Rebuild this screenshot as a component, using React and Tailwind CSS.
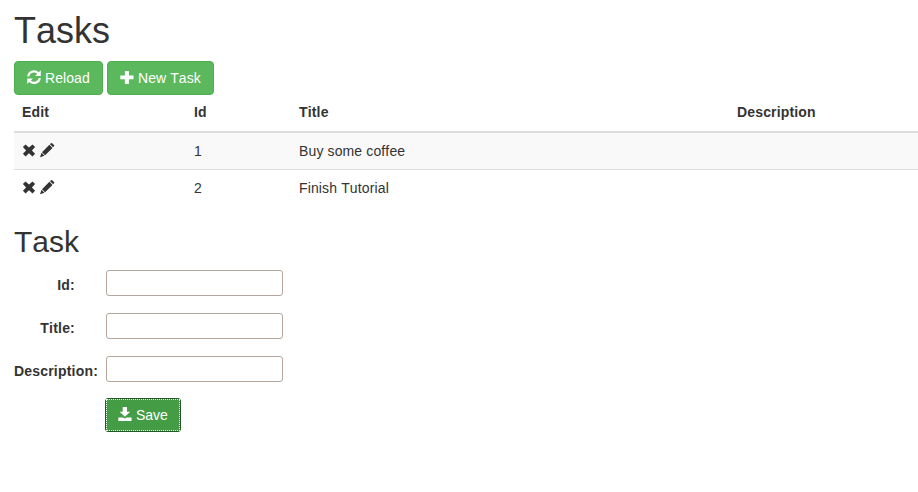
const Icon = ({ children }) => (
  <svg viewBox="0 0 14 14" width="14" height="14" fill="currentColor" className="relative -top-px shrink-0 overflow-visible">
    {children}
  </svg>
);

const Refresh = () => (
  <Icon>
    <path d="M.3 6.4A6.7 6.2 0 0 1 11.8 2.2L13.8.3V5.9H8.1L10.2 3.7A4.8 4.6 0 0 0 2.2 6.4Z" />
    <path d="M13.7 7.9A6.7 6.2 0 0 1 2.2 12.1L.2 14V8.4H5.9L3.8 10.6A4.8 4.6 0 0 0 11.8 7.9Z" />
  </Icon>
);

const Plus = () => (
  <Icon>
    <path d="M5.3 1h3.2q.4 0 .4.4v4h4.2q.4 0 .4.4v3.1q0 .4-.4.4H8.9v4.2q0 .4-.4.4H5.3q-.4 0-.4-.4V9.3H.7q-.4 0-.4-.4V5.8q0-.4.4-.4h4.2v-4q0-.4.4-.4Z" />
  </Icon>
);

const Remove = () => (
  <Icon>
    <path d="M3.5 1.4 7 4.5l3.5-3.1 2.6 2.6-3.2 3.4 3.2 3.4-2.6 2.6L7 10.3l-3.5 3.1L.9 10.8l3.2-3.4L.9 4Z" />
  </Icon>
);

const Pencil = () => (
  <Icon>
    <path d="M10.9.3q.6-.6 1.2 0l1.9 1.8q.6.6 0 1.2l-.9.9-3.1-3ZM9.4 1.8l3.1 3.1-7.4 7.4L2 9.2ZM1.5 9.8l3 3L0 14.2Z" />
  </Icon>
);

const Save = () => (
  <Icon>
    <path d="M4.7 0h4.3v4.7h3.2L6.9 9.8 1.6 4.7h3.1ZM.3 10.4h4.6l2 1.2 2-1.2h4.7v3.2q0 .4-.4.4H.7q-.4 0-.4-.4Z" />
  </Icon>
);

const tasks = [
  { id: 1, title: "Buy some coffee", row: "h-9 bg-[#f9f9f9]" },
  { id: 2, title: "Finish Tutorial", row: "h-[37px] border-t border-[#ddd]" },
];

const fields = [
  { label: "Id:", pad: "pr-[31px]" },
  { label: "Title:", pad: "pr-[31px]" },
  { label: "Description:", pad: "pr-2" },
];

const columns = "grid grid-cols-[172px_105px_438px_1fr] px-2";
const button = "flex h-[34px] items-center gap-1 rounded border border-[#4cae4c] bg-[#5cb85c] px-3 text-white tracking-[0.07px] whitespace-nowrap";

export default function App() {
  return (
    <main className="h-[492px] w-full overflow-hidden bg-white pl-3.5 font-['Liberation_Sans',Arial,sans-serif] text-sm leading-5 text-[#333] [font-kerning:none]">
      <h1 className="h-[61px] pt-[11px] text-[36px] leading-10">Tasks</h1>
      <div className="flex gap-1">
        <button className={`${button} w-[89px]`}><Refresh />Reload</button>
        <button className={`${button} w-[107px]`}><Plus />New Task</button>
      </div>
      <div>
        <div className={`${columns} h-[38px] border-b-2 border-[#ddd] pt-[7px] font-bold tracking-[0.16px]`}>
          <span>Edit</span><span>Id</span><span>Title</span><span>Description</span>
        </div>
        {tasks.map((task) => (
          <div key={task.id} className={`${columns} ${task.row} items-center tracking-[0.13px]`}>
            <span className="flex gap-1"><Remove /><Pencil /></span>
            <span>{task.id}</span>
            <span>{task.title}</span>
            <span />
          </div>
        ))}
      </div>
      <h2 className="h-16 pt-[19px] text-[30px] leading-[33px]">Task</h2>
      <form className="flex flex-col">
        {fields.map((field) => (
          <div key={field.label} className="flex h-[43px] last-of-type:h-[42px]">
            <label className={`flex w-[92px] shrink-0 justify-end whitespace-nowrap pt-[5px] font-bold tracking-[0.2px] ${field.pad}`}>
              {field.label}
            </label>
            <input className="h-[26px] w-[177px] rounded-[3px] border border-[#b5a79d] bg-white px-1" />
          </div>
        ))}
        <button type="button" className="ml-[91px] h-[34px] w-[76px] rounded-[3px] border border-[#255625] bg-[#449d44] text-white">
          <span className="flex h-8 w-[74px] items-center gap-1 border border-dotted border-white pl-[11px]">
            <Save />Save
          </span>
        </button>
      </form>
    </main>
  );
}
